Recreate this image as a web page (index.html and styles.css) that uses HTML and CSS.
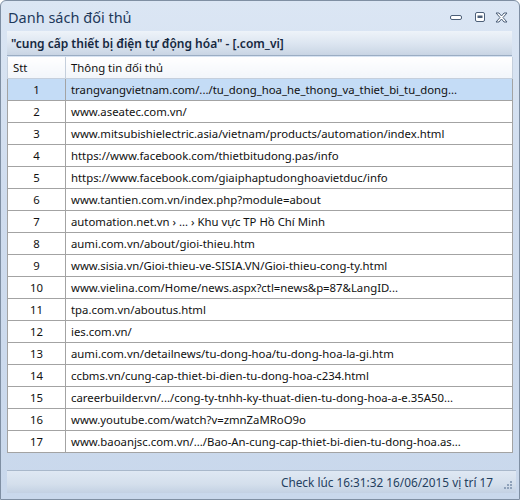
FILE: index.html
```html
<!DOCTYPE html>
<html lang="vi">
<head>
    <meta charset="UTF-8">
    <title>Danh sách đối thủ</title>
    <link rel="stylesheet" href="styles.css">
</head>
<body>
    <div class="window">
        <div class="titlebar">
            <span class="title">Danh sách đối thủ</span>
            <div class="controls">
                <svg class="btn-min" width="12" height="8" viewBox="0 0 12 8"><rect x="0.5" y="2.5" width="11" height="4" rx="1.5" fill="#fff" stroke="#4c5f78"/></svg>
                <svg class="btn-max" width="10" height="10" viewBox="0 0 10 10"><rect x="0.5" y="0.5" width="9" height="9" rx="1.5" fill="#fff" stroke="#4c5f78"/><rect x="2.5" y="3.5" width="5" height="2.5" fill="#4c5f78"/></svg>
                <svg class="btn-close" width="13" height="11" viewBox="0 0 13 11"><path d="M1 1h3l2.5 3l2.5-3h3l-4 4.5l4 4.5h-3l-2.5-3l-2.5 3h-3l4-4.5z" fill="#fff" stroke="#4c5f78" stroke-linejoin="round"/></svg>
            </div>
        </div>
        <div class="panel">
            <div class="group-head">"cung cấp thiết bị điện tự động hóa" - [.com_vi]</div>
            <table class="grid">
                <thead>
                    <tr><th class="stt">Stt</th><th>Thông tin đối thủ</th></tr>
                </thead>
                <tbody>
                    <tr class="selected"><td class="stt">1</td><td>trangvangvietnam.com/.../tu_dong_hoa_he_thong_va_thiet_bi_tu_dong...</td></tr>
                    <tr><td class="stt">2</td><td>www.aseatec.com.vn/</td></tr>
                    <tr><td class="stt">3</td><td>www.mitsubishielectric.asia/vietnam/products/automation/index.html</td></tr>
                    <tr><td class="stt">4</td><td>https://www.facebook.com/thietbitudong.pas/info</td></tr>
                    <tr><td class="stt">5</td><td>https://www.facebook.com/giaiphaptudonghoavietduc/info</td></tr>
                    <tr><td class="stt">6</td><td>www.tantien.com.vn/index.php?module=about</td></tr>
                    <tr><td class="stt">7</td><td>automation.net.vn › ... › Khu vực TP Hồ Chí Minh</td></tr>
                    <tr><td class="stt">8</td><td>aumi.com.vn/about/gioi-thieu.htm</td></tr>
                    <tr><td class="stt">9</td><td>www.sisia.vn/Gioi-thieu-ve-SISIA.VN/Gioi-thieu-cong-ty.html</td></tr>
                    <tr><td class="stt">10</td><td>www.vielina.com/Home/news.aspx?ctl=news&amp;p=87&amp;LangID...</td></tr>
                    <tr><td class="stt">11</td><td>tpa.com.vn/aboutus.html</td></tr>
                    <tr><td class="stt">12</td><td>ies.com.vn/</td></tr>
                    <tr><td class="stt">13</td><td>aumi.com.vn/detailnews/tu-dong-hoa/tu-dong-hoa-la-gi.htm</td></tr>
                    <tr><td class="stt">14</td><td>ccbms.vn/cung-cap-thiet-bi-dien-tu-dong-hoa-c234.html</td></tr>
                    <tr><td class="stt">15</td><td>careerbuilder.vn/.../cong-ty-tnhh-ky-thuat-dien-tu-dong-hoa-a-e.35A50...</td></tr>
                    <tr><td class="stt">16</td><td>www.youtube.com/watch?v=zmnZaMRoO9o</td></tr>
                    <tr><td class="stt">17</td><td>www.baoanjsc.com.vn/.../Bao-An-cung-cap-thiet-bi-dien-tu-dong-hoa.as...</td></tr>
                </tbody>
            </table>
            <div class="spacer"></div>
            <div class="statusbar">
                <span class="status-text">Check lúc 16:31:32 16/06/2015 vị trí 17</span>
                <svg class="grip" width="10" height="10" viewBox="0 0 10 10" fill="#8fa2ba">
                    <rect x="7" y="1" width="2" height="2"/>
                    <rect x="4" y="4" width="2" height="2"/><rect x="7" y="4" width="2" height="2"/>
                    <rect x="1" y="7" width="2" height="2"/><rect x="4" y="7" width="2" height="2"/><rect x="7" y="7" width="2" height="2"/>
                </svg>
            </div>
        </div>
    </div>
</body>
</html>
```

FILE: styles.css
```css
body {
    margin: 0;
    font-family: "Noto Sans", "Open Sans", Arial, sans-serif;
    background: #fff;
}
.window {
    width: 520px;
    height: 500px;
    box-sizing: border-box;
    border: 1px solid #7f8fa3;
    border-radius: 6px 6px 0 0;
    background: linear-gradient(180deg, #dbe6f4 0%, #cfdcee 40%, #c9d8ec 100%);
    display: flex;
    flex-direction: column;
    padding: 0 6px 6px 6px;
}
.titlebar {
    height: 30px;
    display: flex;
    align-items: center;
    justify-content: space-between;
}
.title {
    font-size: 14.5px;
    color: #1e395b;
    padding-left: 1px;
    padding-top: 2px;
}
.controls {
    display: flex;
    align-items: center;
    padding-right: 5px;
    padding-top: 2px;
}
.btn-min {
    margin-right: 13px;
}
.btn-max {
    margin-right: 10px;
}
.panel {
    flex: 1;
    display: flex;
    flex-direction: column;
}
.group-head {
    height: 25px;
    line-height: 25px;
    box-sizing: border-box;
    padding-left: 4px;
    font-size: 12px;
    font-weight: 600;
    color: #15283f;
    background: linear-gradient(180deg, #eef3f9 0%, #dde6f1 50%, #c9d5e4 100%);
    border-bottom: 1px solid #9badc3;
    margin-right: 1px;
    white-space: nowrap;
}
.grid {
    border-collapse: collapse;
    width: 506px;
    font-size: 11.35px;
    color: #111;
    table-layout: fixed;
    margin-top: 1px;
}
.grid th, .grid td {
    height: 21px;
    border: 1px solid #a3a3a3;
    padding: 0 5px;
    white-space: nowrap;
    overflow: hidden;
    text-align: left;
    font-weight: normal;
}
.grid th {
    background: linear-gradient(180deg, #ffffff 0%, #f2f5fa 100%);
    border-color: #c5cfdc;
    border-top: none;
}
.grid th.stt {
    width: 47px;
}
.grid td.stt {
    text-align: center;
    padding: 0;
}
.grid td {
    background: #fff;
}
.grid tr.selected td {
    background: #c4dcf6;
}
.spacer {
    flex: 1;
}
.statusbar {
    position: relative;
    height: 22px;
    margin-right: -3px;
    display: flex;
    align-items: center;
    justify-content: flex-end;
    padding-right: 23px;
    font-size: 11.8px;
    color: #24405f;
    background: linear-gradient(180deg, #dfe8f3 0%, #d4dfec 60%, #c3d1e3 100%);
    border-top: 1px solid #a9b8cb;
}
.grip {
    position: absolute;
    right: 3px;
    bottom: 3px;
}
```
